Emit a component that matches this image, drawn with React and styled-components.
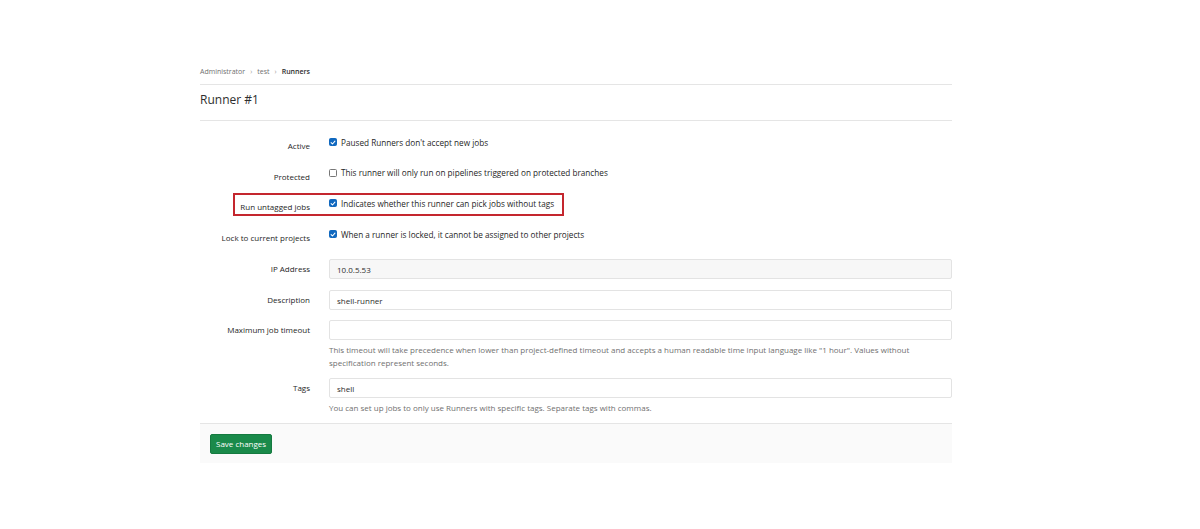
import React from "react";
import styled, { createGlobalStyle } from "styled-components";

const Global = createGlobalStyle`
  html, body { margin: 0; padding: 0; background: #fff; }
  body { font-family: "Open Sans", "Noto Sans", Arial, sans-serif; color: #2e2e2e; }
  * { box-sizing: border-box; }
`;

const Page = styled.div`
  width: 1200px;
  height: 529px;
  padding: 64px 248px 0 200px;
`;

const Breadcrumbs = styled.nav`
  height: 21px;
  display: flex;
  align-items: flex-start;
  gap: 5px;
  font-size: 7px;
  line-height: 16px;
  color: #707070;
  border-bottom: 1px solid #e5e5e5;
`;

const Crumb = styled.span`
  color: ${(p) => (p.$current ? "#2e2e2e" : "#707070")};
  font-weight: ${(p) => (p.$current ? 600 : 400)};
`;

const Sep = styled.span`
  font-size: 7px;
  color: #999;
`;

const TitleBar = styled.div`
  height: 36px;
  padding-top: 6px;
  border-bottom: 1px solid #e5e5e5;
`;

const Title = styled.h1`
  margin: 0;
  font-size: 12px;
  line-height: 18px;
  font-weight: 400;
  color: #2e2e2e;
`;

const Form = styled.div`
  padding-top: 11px;
`;

const Row = styled.div`
  position: relative;
  display: grid;
  grid-template-columns: 110px 1fr;
  column-gap: 19px;
  align-items: ${(p) => (p.$check ? "start" : "center")};
  margin-bottom: ${(p) => (p.$mb === undefined ? 11 : p.$mb)}px;
`;

const Label = styled.label`
  text-align: right;
  font-size: 8px;
  font-weight: 500;
  color: #262626;
  padding-top: ${(p) => p.$pt || 0}px;
  line-height: 12px;
  white-space: nowrap;
`;

const CheckLine = styled.div`
  display: flex;
  align-items: center;
  gap: 4px;
  height: 20px;
  font-size: 8.2px;
  font-weight: 500;
  color: #262626;
`;

const Box = styled.span`
  width: 8px;
  height: 8px;
  border-radius: 1.5px;
  display: inline-flex;
  align-items: center;
  justify-content: center;
  background: ${(p) => (p.$on ? "#1068bf" : "#fff")};
  border: 1px solid ${(p) => (p.$on ? "#1068bf" : "#777")};
  flex: none;
`;

const Field = styled.div`
  display: flex;
  flex-direction: column;
`;

const Input = styled.div`
  height: 20px;
  border: 1px solid #e3e3e3;
  border-radius: 2px;
  background: ${(p) => (p.$disabled ? "#f7f7f7" : "#fff")};
  font-size: 8px;
  color: #2e2e2e;
  display: flex;
  align-items: center;
  padding: 0 7px;
`;

const Help = styled.p`
  margin: 2.5px 0 0;
  font-size: 8px;
  line-height: 13px;
  color: #707070;
`;

const Highlight = styled.div`
  position: absolute;
  left: 33px;
  top: 0;
  width: 331px;
  height: 23px;
  border: 2px solid #c4262e;
  pointer-events: none;
`;

const Footer = styled.div`
  margin-top: 9.5px;
  height: 40px;
  background: #fafafa;
  border-top: 1px solid #e5e5e5;
  display: flex;
  align-items: center;
  padding-left: 10px;
`;

const Button = styled.button`
  height: 20px;
  padding: 0 5px;
  font-family: inherit;
  font-size: 8px;
  color: #fff;
  background: #1a8a4a;
  border: 1px solid #157a40;
  border-radius: 2px;
`;

const Tick = () => (
  <svg width="7" height="7" viewBox="0 0 8 8">
    <path d="M1.5 4.2 L3.3 6 L6.6 2.2" fill="none" stroke="#fff" strokeWidth="1.4" strokeLinecap="round" strokeLinejoin="round" />
  </svg>
);

const CheckRow = ({ label, text, on, highlight, mb = 10.7 }) => (
  <Row $check $mb={mb}>
    {highlight && <Highlight />}
    <Label $pt={8}>{label}</Label>
    <CheckLine>
      <Box $on={on}>{on && <Tick />}</Box>
      {text}
    </CheckLine>
  </Row>
);

export default function App() {
  return (
    <>
      <Global />
      <Page>
        <Breadcrumbs>
          <Crumb>Administrator</Crumb>
          <Sep>›</Sep>
          <Crumb>test</Crumb>
          <Sep>›</Sep>
          <Crumb $current>Runners</Crumb>
        </Breadcrumbs>
        <TitleBar>
          <Title>Runner #1</Title>
        </TitleBar>
        <Form>
          <CheckRow label="Active" text="Paused Runners don't accept new jobs" on />
          <CheckRow label="Protected" text="This runner will only run on pipelines triggered on protected branches" />
          <CheckRow label="Run untagged jobs" text="Indicates whether this runner can pick jobs without tags" on highlight />
          <CheckRow label="Lock to current projects" text="When a runner is locked, it cannot be assigned to other projects" on mb={15} />
          <Row>
            <Label>IP Address</Label>
            <Input $disabled>10.0.5.53</Input>
          </Row>
          <Row $mb={10}>
            <Label>Description</Label>
            <Input>shell-runner</Input>
          </Row>
          <Row $check $mb={9.5}>
            <Label $pt={4}>Maximum job timeout</Label>
            <Field>
              <Input />
              <Help>
                This timeout will take precedence when lower than project-defined timeout and accepts a human readable time input language like "1 hour". Values without specification represent seconds.
              </Help>
            </Field>
          </Row>
          <Row $check $mb={0}>
            <Label $pt={4}>Tags</Label>
            <Field>
              <Input>shell</Input>
              <Help>You can set up jobs to only use Runners with specific tags. Separate tags with commas.</Help>
            </Field>
          </Row>
        </Form>
        <Footer>
          <Button>Save changes</Button>
        </Footer>
      </Page>
    </>
  );
}
